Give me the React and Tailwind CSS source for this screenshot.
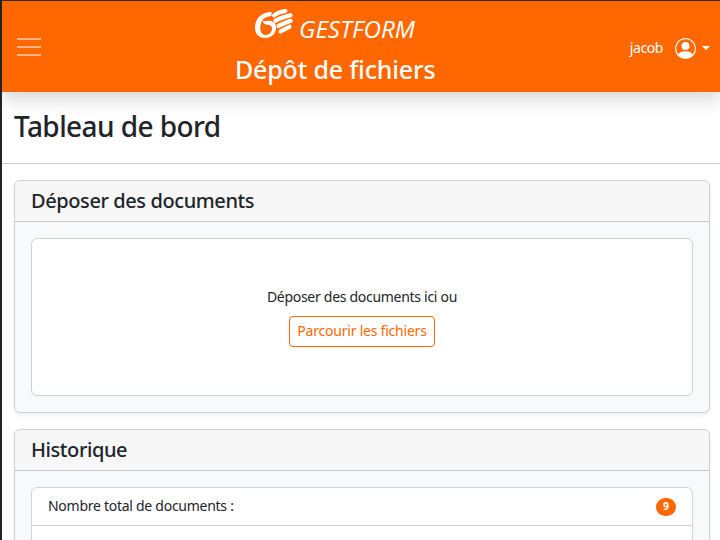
function Logo() {
  return (
    <svg width="164" height="36" viewBox="0 0 164 36" className="block overflow-visible" aria-label="Gestform">
      <path fill="#fff" d="M18.500 6C8 6 2 13 2 21.500C2 28 6 32 12 32C18.500 32 23 27.500 23 21.500C23 17 20 14.800 16 14.800L9.500 15.200Q11 18.800 14.500 18.800C17.500 18.800 19 20.300 19 22.800C19 26.500 16 29 12.800 29C9 29 7.300 26 7.300 22C7.300 15.500 10.500 10.500 18.500 10Z" />
      <g fill="none" stroke="#fff" strokeLinecap="round">
        <path d="M21 9.500Q25 6 32.500 4.900" strokeWidth="4" />
        <path d="M22.500 14.600Q28 11.500 37.500 9.200" strokeWidth="4.200" />
        <path d="M25.500 19.800Q30 17.700 37.600 14.800" strokeWidth="4.200" />
        <path d="M27.500 25.500Q31 23.500 36.500 20.800" strokeWidth="4.200" />
      </g>
      <text x="46" y="31.7" fill="#fff" fontSize="24" fontStyle="italic" textLength="116" lengthAdjust="spacingAndGlyphs" className="font-['Open_Sans',sans-serif] font-normal">GESTFORM</text>
    </svg>
  );
}

function Card({ title, children, className = "" }) {
  return (
    <section className={"rounded-md border border-[#cfd0d2] bg-[#f8f9fb] shadow-[0_2px_4px_rgba(0,0,0,0.075)] " + className}>
      <h2 className="flex h-[41px] items-center rounded-t-md border-b border-[#c9cacc] bg-[#f7f7f7] px-4 text-[20px] leading-6 font-medium tracking-[-0.41px]">
        {title}
      </h2>
      <div className="p-4">{children}</div>
    </section>
  );
}

export default function App() {
  return (
    <div className="h-[540px] w-[720px] overflow-hidden border-t border-l-2 border-t-[#2c2c2c] border-l-[#222326] bg-white font-['Noto_Sans','Open_Sans',sans-serif] text-[14px] text-[#212529]">
      <header className="relative flex h-[91px] items-center justify-between bg-[#ff6700] pr-[10px] pl-[15px] text-white shadow-[0_8px_16px_rgba(0,0,0,0.15)]">
        <button className="flex w-6 flex-col gap-1.5" aria-label="Menu">
          <span className="h-0.5 w-full bg-[#ffb380]" />
          <span className="h-0.5 w-full bg-[#ffb380]" />
          <span className="h-0.5 w-full bg-[#ffb380]" />
        </button>
        <div className="absolute top-[5px] left-[233px] w-[204px]">
          <div className="ml-[18px]"><Logo /></div>
          <h1 className="mt-3 text-[25px] leading-[30px] font-medium tracking-[-0.17px] whitespace-nowrap">Dépôt de fichiers</h1>
        </div>
        <div className="flex items-center">
          <span className="mt-px tracking-[-0.4px]">jacob</span>
          <svg width="21" height="21" viewBox="0 0 16 16" fill="currentColor" className="mt-[3px] ml-3">
            <path d="M11 6a3 3 0 1 1-6 0 3 3 0 0 1 6 0" />
            <path fillRule="evenodd" d="M0 8a8 8 0 1 1 16 0A8 8 0 0 1 0 8m8-7a7 7 0 0 0-5.468 11.370C3.242 11.226 4.805 10 8 10s4.757 1.225 5.468 2.370A7 7 0 0 0 8 1" />
          </svg>
          <span className="mt-[3px] ml-[6px] border-x-4 border-t-4 border-x-transparent border-t-white" />
        </div>
      </header>
      <div className="h-[72px] border-b border-[#cbd0d9] px-3 pt-[17px]">
        <h1 className="text-[28px] leading-[34px] font-medium tracking-[-0.58px] whitespace-nowrap">Tableau de bord</h1>
      </div>
      <main className="pt-[16px] pr-[10px] pl-3">
        <Card title="Déposer des documents">
          <div className="flex h-[158px] flex-col items-center rounded-md border border-[#cfd0d2] bg-white pt-[47px]">
            <p className="leading-[21px] tracking-[-0.29px] whitespace-nowrap">Déposer des documents ici ou</p>
            <button className="mt-[9px] flex h-[31px] w-[146px] items-center justify-center rounded border border-[#ff6700] pb-[2px] leading-[21px] tracking-[-0.22px] whitespace-nowrap text-[#ff6700]">Parcourir les fichiers</button>
          </div>
        </Card>
        <Card title="Historique" className="mt-4">
          <div className="h-[158px] rounded-md border border-[#cfd4da] bg-white">
            <div className="flex h-[38px] items-center justify-between border-b border-[#cfd0d2] px-4">
              <span className="pb-[2px] tracking-[-0.27px]">Nombre total de documents :</span>
              <span className="flex h-[18px] w-5 items-center justify-center rounded-full bg-[#ff6700] text-[10.5px] font-bold text-white">9</span>
            </div>
          </div>
        </Card>
      </main>
    </div>
  );
}
